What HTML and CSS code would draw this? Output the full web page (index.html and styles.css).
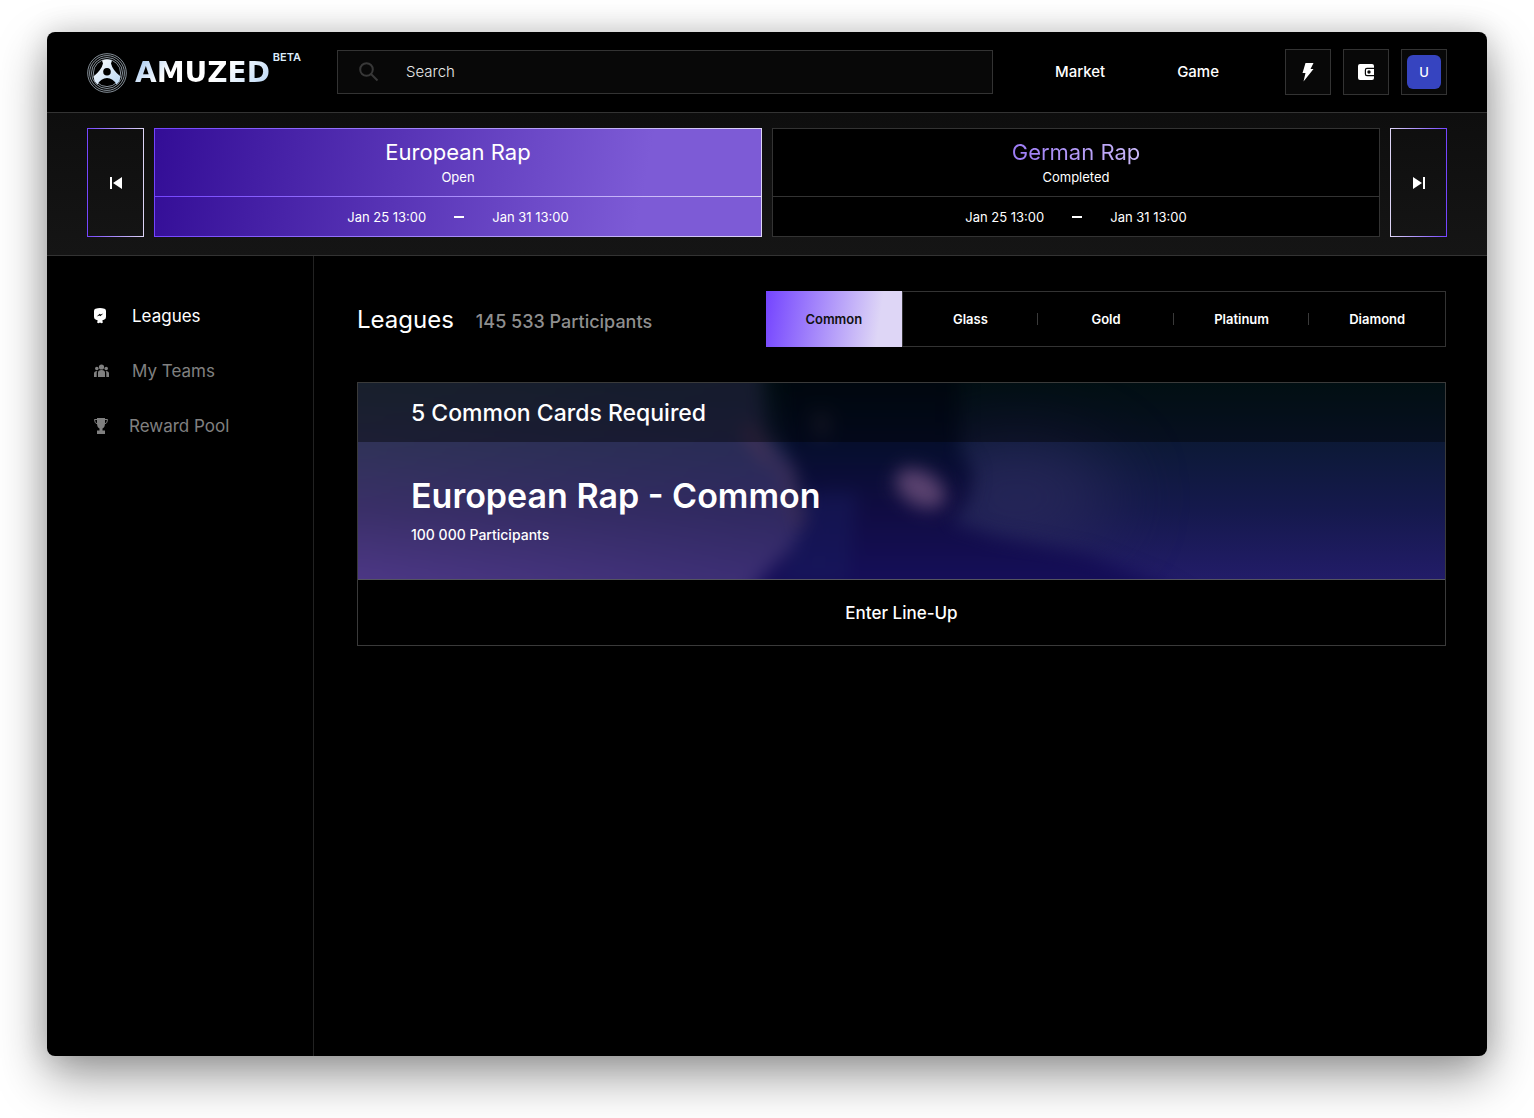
FILE: index.html
```html
<!DOCTYPE html>
<html lang="en">
<head>
<meta charset="utf-8">
<meta name="viewport" content="width=device-width, initial-scale=1">
<title>Amuzed – Leagues</title>
<link rel="stylesheet" href="styles.css">
</head>
<body>
<div class="window">
  <header class="topbar">
    <a class="logo" href="#" aria-label="Amuzed beta">
      <svg class="logo-mark" viewBox="0 0 40 40" aria-hidden="true">
        <defs>
          <linearGradient id="steel" x1="0" y1="0" x2="1" y2="1">
            <stop offset="0" stop-color="#ffffff"/><stop offset="1" stop-color="#b9d6f2"/>
          </linearGradient>
        </defs>
        <g fill="none" stroke="#a9b6c2" stroke-width="0.8">
          <circle cx="20" cy="20" r="19.300"/><circle cx="20" cy="20" r="17.400"/><circle cx="20" cy="20" r="15.500"/><circle cx="20" cy="20" r="13.600"/>
        </g>
        <path fill="url(#steel)" d="M15 7.500Q20 5.500 25 7.500L24 10.500Q25.500 17 33.500 23.500L32.500 28 29.500 31.500Q26 25 20 25T10.500 31.500L7.500 28 6.500 23.500Q14.500 17 16 10.500z"/>
        <circle cx="20" cy="18.800" r="3.800" fill="#000"/>
      </svg>
      <span class="wordmark">AMUZED</span>
      <span class="beta">BETA</span>
    </a>
    <label class="search">
      <svg class="search-icon" viewBox="0 0 20 20" aria-hidden="true"><circle cx="7.500" cy="7.500" r="6.300"/><path d="M12 12l6.500 6.500"/></svg>
      <input class="search-input" type="search" placeholder="Search" aria-label="Search">
    </label>
    <nav class="main-nav">
      <a href="#">Market</a>
      <a href="#">Game</a>
    </nav>
    <div class="actions">
      <button class="icon-btn" type="button" aria-label="Activity">
        <svg width="20" height="20" viewBox="0 0 20 20" aria-hidden="true"><path d="M7.500 1h8l-3 6H15.500L5.500 19.500 7.500 11H4.500z"/></svg>
      </button>
      <button class="icon-btn" type="button" aria-label="Wallet">
        <svg width="18" height="18" viewBox="0 0 18 18" aria-hidden="true"><path d="M3 1h12a2 2 0 0 1 2 2v1.800H10a2.200 2.200 0 0 0-2.200 2.200v4A2.200 2.200 0 0 0 10 13.200h7V15a2 2 0 0 1-2 2H3a2 2 0 0 1-2-2V3a2 2 0 0 1 2-2z"/><path fill-rule="evenodd" d="M10 6h7v6h-7a1 1 0 0 1-1-1V7a1 1 0 0 1 1-1zm2 1.300a1.700 1.700 0 1 0 0 3.400 1.700 1.700 0 0 0 0-3.400z"/></svg>
      </button>
      <button class="icon-btn" type="button" aria-label="Account"><span class="avatar">U</span></button>
    </div>
  </header>

  <section class="strip" aria-label="Competitions">
    <button class="step step-prev" type="button" aria-label="Previous">
      <svg width="14" height="14" viewBox="0 0 14 14" aria-hidden="true"><path d="M1 1h2v12H1zM13 1v12L4 7z"/></svg>
    </button>
    <a class="event event-active" href="#">
      <span class="event-head"><span class="event-title">European Rap</span><span class="event-state">Open</span></span>
      <span class="event-dates"><span>Jan 25 13:00</span><span class="dash"></span><span>Jan 31 13:00</span></span>
    </a>
    <a class="event" href="#">
      <span class="event-head"><span class="event-title">German Rap</span><span class="event-state">Completed</span></span>
      <span class="event-dates"><span>Jan 25 13:00</span><span class="dash"></span><span>Jan 31 13:00</span></span>
    </a>
    <button class="step step-next" type="button" aria-label="Next">
      <svg width="14" height="14" viewBox="0 0 14 14" aria-hidden="true"><path d="M11 1h2v12h-2zM1 1v12l9-6z"/></svg>
    </button>
  </section>

  <div class="content">
    <nav class="sidebar" aria-label="Sections">
      <a class="side-link side-link-active" href="#">
        <svg width="16" height="16" viewBox="0 0 16 16" aria-hidden="true"><path fill-rule="evenodd" d="M2.500.7Q7-.7 11.500.7 13 1.200 13 3v6q0 2.200-2 2.800l-1.600.5.4 2.400-1.500.6L7 14.400l-1.300.9-1.500-.6.4-2.400L3 11.800Q1 11.200 1 9V3Q1 1.200 2.500.7zM3.700 8.600l2.700-1.200.9.8 3-2.700-2.700 1-.9-.8z"/></svg>
        <span>Leagues</span>
      </a>
      <a class="side-link" href="#">
        <svg width="16" height="16" viewBox="0 0 16 16" aria-hidden="true"><circle cx="8.500" cy="4" r="2.600"/><circle cx="3.800" cy="5.500" r="1.800"/><circle cx="13.200" cy="5.500" r="1.800"/><path d="M5 14V9.500Q5 7 8.500 7T12 9.500V14zM1 14v-3.500Q1 8 4.300 8q-.6 1-.6 2v4zM16 14v-3.500Q16 8 12.700 8q.6 1 .6 2v4z"/></svg>
        <span>My Teams</span>
      </a>
      <a class="side-link side-link-tight" href="#">
        <svg width="16" height="16" viewBox="0 0 16 16" aria-hidden="true"><path d="M4 0h8v5q0 4.500-2.500 5.500V12.500H12V16H4v-3.500h2.500V10.500Q4 9.500 4 5z"/><path fill="none" stroke="#808080" d="M4 1.500H1.500q0 4 3 4.500M12 1.500h2.500q0 4-3 4.500"/></svg>
        <span>Reward Pool</span>
      </a>
    </nav>

    <main class="main">
      <div class="main-head">
        <div class="heading">
          <h1 class="page-title">Leagues</h1>
          <p class="page-count">145 533 Participants</p>
        </div>
        <div class="tabs" role="tablist">
          <button class="tab tab-active" type="button" role="tab" aria-selected="true">Common</button>
          <button class="tab" type="button" role="tab" aria-selected="false">Glass</button>
          <button class="tab" type="button" role="tab" aria-selected="false">Gold</button>
          <button class="tab" type="button" role="tab" aria-selected="false">Platinum</button>
          <button class="tab" type="button" role="tab" aria-selected="false">Diamond</button>
        </div>
      </div>

      <article class="league">
        <div class="banner">
          <svg class="banner-art" viewBox="0 0 1088 197" preserveAspectRatio="none" aria-hidden="true">
            <defs>
              <linearGradient id="night" x1="0" y1="0" x2="0" y2="1">
                <stop offset="0" stop-color="#031920"/><stop offset=".3" stop-color="#0c1936"/><stop offset=".65" stop-color="#15194d"/><stop offset="1" stop-color="#221c68"/>
              </linearGradient>
              <linearGradient id="dusk" gradientUnits="userSpaceOnUse" x1="0" y1="0" x2="0" y2="197">
                <stop offset="0" stop-color="#29364a"/><stop offset=".35" stop-color="#31325a"/><stop offset=".65" stop-color="#3a2f68"/><stop offset="1" stop-color="#4c3785"/>
              </linearGradient>
              <linearGradient id="shade" gradientUnits="userSpaceOnUse" x1="0" y1="0" x2="440" y2="0">
                <stop offset="0" stop-color="#141c48" stop-opacity="0"/><stop offset="1" stop-color="#1a1c50" stop-opacity=".35"/>
              </linearGradient>
              <linearGradient id="figure" gradientUnits="userSpaceOnUse" x1="0" y1="0" x2="0" y2="197">
                <stop offset="0" stop-color="#010d18"/><stop offset=".3" stop-color="#050e2c"/><stop offset=".65" stop-color="#100c42"/><stop offset="1" stop-color="#150e58"/>
              </linearGradient>
              <filter id="soft" filterUnits="userSpaceOnUse" x="-100" y="-100" width="1288" height="397" color-interpolation-filters="sRGB"><feGaussianBlur stdDeviation="9"/></filter>
              <filter id="softer" filterUnits="userSpaceOnUse" x="-100" y="-200" width="1288" height="597" color-interpolation-filters="sRGB"><feGaussianBlur stdDeviation="36"/></filter>
            </defs>
            <rect width="1088" height="197" fill="url(#night)"/>
            <ellipse cx="660" cy="115" rx="100" ry="60" fill="#2b2a5c" opacity=".75" filter="url(#softer)"/>
            <g filter="url(#soft)">
              <path fill="url(#dusk)" d="M-90-90H400L408 50 440 85 434 120 440 160 396 280H-90z"/>
              <path fill="url(#shade)" d="M-90-90H400L408 50 440 85 434 120 440 160 396 280H-90z"/>
              <path fill="url(#figure)" d="M412-90H603L602 65 616 90 610 120 592 140 640 155 730 172 800 200 960 290H350L402 197 440 160 455 120 428 70z"/>
              <path fill="#171b5e" opacity=".5" d="M450 110h50l-10 90h-66z"/>
              <path fill="#4a3558" opacity=".8" d="M382 48l14-10 22 42-8 4z"/>
              <path fill="#4a3458" opacity=".6" d="M420 80l12 0 18 60-14 10z"/>
              <path fill="#333346" opacity=".6" d="M455 30h16v24h-12z"/>
            </g>
            <ellipse cx="563" cy="106" rx="27" ry="17" transform="rotate(30 563 106)" fill="#5a426f" filter="url(#soft)"/>
          </svg>
          <p class="banner-head">5 Common Cards Required</p>
          <div class="banner-body">
            <h2 class="league-title">European Rap - Common</h2>
            <p class="league-count">100 000 Participants</p>
          </div>
        </div>
        <button class="enter" type="button">Enter Line-Up</button>
      </article>
    </main>
  </div>
</div>
</body>
</html>
```

FILE: styles.css
```css
:root {
  --line: #333;
  --violet: #7444ff;
  --pale: #ded6f6;
  --text: "Inter", "Liberation Sans", sans-serif;
}

* { box-sizing: border-box; }

body {
  margin: 0;
  padding: 32px 47px 62px;
  min-height: 100vh;
  display: flex;
  background: #fff;
  color: #fff;
  font-family: var(--text);
}

a { color: inherit; text-decoration: none; }
h1, h2, p { margin: 0; }
button { font-family: inherit; color: inherit; cursor: pointer; padding: 0; }
svg { display: block; fill: currentColor; }

.window {
  flex: 1;
  display: flex;
  flex-direction: column;
  background: #000;
  border-radius: 8px;
  box-shadow: 0 20px 50px rgba(0, 0, 0, .4), 0 0 30px rgba(0, 0, 0, .14);
}

/* Top bar */
.topbar {
  display: flex;
  align-items: center;
  padding: 17px 40px;
  border-bottom: 1px solid var(--line);
}

.logo {
  position: relative;
  display: flex;
  align-items: center;
  gap: 8px;
  width: 214px;
  padding-top: 2px;
  margin-right: 36px;
}

.logo-mark { width: 40px; height: 40px; flex: none; }

.wordmark {
  font: bold 28px/32px "DejaVu Sans", sans-serif;
  background: linear-gradient(135deg, #9cc4f0, #fff 30%, #fff 60%, #b5d4f5);
  background-clip: text;
  color: transparent;
}

.beta {
  position: absolute;
  top: 0;
  right: 0;
  font-size: 11px;
  line-height: 12px;
  font-weight: 600;
  color: #dcecfb;
}

.search {
  flex: 1;
  display: flex;
  align-items: center;
  gap: 27px;
  height: 44px;
  padding: 0 21px;
  background: #080808;
  border: 1px solid var(--line);
}

.search-icon {
  width: 20px;
  height: 20px;
  fill: none;
  stroke: #383838;
  stroke-width: 2;
}

.search-input {
  flex: 1;
  min-width: 0;
  padding: 0;
  border: 0;
  outline: 0;
  background: none;
  color: #fff;
  font: 300 15px/20px var(--text);
}

.search-input::placeholder { color: #e8e8e8; opacity: 1; }

.main-nav {
  display: flex;
  justify-content: space-between;
  width: 164px;
  margin: 0 66px 0 62px;
  font-size: 15px;
  line-height: 20px;
  font-weight: 500;
}

.actions { display: flex; gap: 12px; }

.icon-btn {
  display: grid;
  place-items: center;
  width: 46px;
  height: 46px;
  background: #080808;
  border: 1px solid var(--line);
}

.avatar {
  display: grid;
  place-items: center;
  width: 34px;
  height: 34px;
  border-radius: 6px;
  background: #3644c0;
  font-size: 13px;
  font-weight: 500;
}

/* Competition strip */
.strip {
  display: flex;
  gap: 10px;
  padding: 15px 40px 18px;
  background: linear-gradient(#0e0e0e, #151515);
  border-bottom: 1px solid var(--line);
}

.step {
  display: grid;
  place-items: center;
  flex: none;
  width: 57px;
  background: none;
  border: 1px solid;
}

.step-prev { border-image: linear-gradient(90deg, var(--violet), var(--pale)) 1; }
.step-next { border-image: linear-gradient(270deg, var(--violet), var(--pale)) 1; }

.event {
  flex: 1;
  background: #000;
  border: 1px solid var(--line);
}

.event-active {
  background: linear-gradient(100deg, #330d96, #7d5bd6 80%);
  border-image: linear-gradient(90deg, var(--violet), var(--pale)) 1;
}

.event-head {
  display: flex;
  flex-direction: column;
  align-items: center;
  padding: 9px 0 8px;
  border-bottom: 1px solid var(--line);
}

.event-active .event-head { border-image: linear-gradient(90deg, var(--violet), var(--pale)) 1; }

.event-title { font-size: 22px; line-height: 28px; }

.event:not(.event-active) .event-title {
  background: linear-gradient(90deg, #9c7bf5, #c9b8f8);
  background-clip: text;
  color: transparent;
}

.event-state { font-size: 13px; line-height: 22px; }

.event-dates {
  display: flex;
  justify-content: center;
  align-items: center;
  gap: 28px;
  height: 39px;
  font-size: 13px;
}

.dash { width: 10px; height: 2px; background: #fff; }

/* Body */
.content { flex: 1; display: flex; }

.sidebar {
  flex: none;
  width: 267px;
  display: flex;
  flex-direction: column;
  gap: 31px;
  padding: 48px 46px;
  border-right: 1px solid #222;
}

.side-link {
  display: flex;
  align-items: center;
  gap: 23px;
  font-size: 17px;
  line-height: 24px;
  color: #808080;
}

.side-link-active { color: #fff; }
.side-link-tight { gap: 20px; }

.main {
  flex: 1;
  min-width: 0;
  padding: 35px 41px 35px 43px;
}

.main-head { display: flex; align-items: center; justify-content: space-between; }

.heading {
  display: flex;
  align-items: baseline;
  gap: 22px;
  padding-top: 2px;
}

.page-title { font-size: 24px; line-height: 32px; font-weight: 400; }

.page-count {
  font-size: 18px;
  line-height: 24px;
  font-weight: 500;
  color: #8f8f8f;
}

.tabs {
  display: flex;
  flex: none;
  width: 680px;
  height: 56px;
  border: 1px solid var(--line);
}

.tab {
  position: relative;
  flex: 1;
  border: 0;
  background: none;
  font-size: 13px;
  font-weight: 600;
}

.tab-active {
  margin: -1px 0 -1px -1px;
  background: linear-gradient(98deg, var(--violet), var(--pale) 82%);
  color: #111;
}

.tab-active + .tab { border-left: 1px solid var(--line); }

.tab:not(.tab-active):not(:last-child)::after {
  content: "";
  position: absolute;
  right: 0;
  top: 21px;
  width: 1px;
  height: 12px;
  background: #3a3a3a;
}

.league { margin-top: 35px; border: 1px solid #3a3a3a; }
.banner { position: relative; border-bottom: 1px solid #55555f; }

.banner-art {
  position: absolute;
  inset: 0;
  width: 100%;
  height: 100%;
}

.banner-head {
  position: relative;
  padding: 14px 53px 13px;
  background: rgba(0, 0, 0, .4);
  font-size: 23px;
  line-height: 32px;
  font-weight: 500;
}

.banner-body { position: relative; padding: 32px 53px 34px; }
.league-title { font-size: 34px; line-height: 44px; font-weight: 600; }

.league-count {
  margin-top: 7px;
  font-size: 14px;
  line-height: 20px;
  font-weight: 500;
}

.enter {
  width: 100%;
  height: 65px;
  border: 0;
  background: #000;
  font-size: 17px;
  font-weight: 500;
}
```
